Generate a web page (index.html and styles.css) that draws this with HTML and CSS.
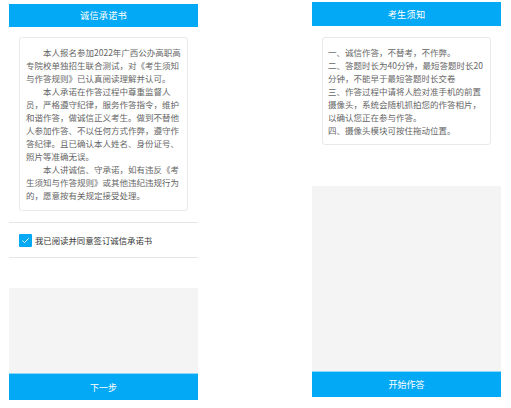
FILE: index.html
```html
<!DOCTYPE html>
<html lang="zh-CN">
<head>
<meta charset="utf-8">
<title>诚信承诺书</title>
<link rel="stylesheet" href="styles.css">
</head>
<body>
<div class="stage">
  <section class="panel panel-left">
    <header class="bar">诚信承诺书</header>
    <div class="card card-pledge">
      <p class="para">本人报名参加2022年广西公办高职高<br>专院校单独招生联合测试，对《考生须知<br>与作答规则》已认真阅读理解并认可。</p>
      <p class="para">本人承诺在作答过程中尊重监督人<br>员，严格遵守纪律，服务作答指令，维护<br>和谐作答，做诚信正义考生。做到不替他<br>人参加作答、不以任何方式作弊，遵守作<br>答纪律。且已确认本人姓名、身份证号、<br>照片等准确无误。</p>
      <p class="para">本人讲诚信、守承诺，如有违反《考<br>生须知与作答规则》或其他违纪违规行为<br>的，愿意按有关规定接受处理。</p>
    </div>
    <label class="agree">
      <span class="check"><svg viewBox="0 0 13 13" width="13" height="13"><path d="M3.6 6.8 L5.6 8.6 L9.4 4.6" fill="none" stroke="#fff" stroke-width="0.9" stroke-linecap="round" stroke-linejoin="round"/></svg></span>
      <span class="agree-text">我已阅读并同意签订诚信承诺书</span>
    </label>
    <div class="spacer spacer-left"></div>
    <div class="gray gray-left"></div>
    <button class="btn">下一步</button>
  </section>

  <section class="panel panel-right">
    <header class="bar">考生须知</header>
    <div class="card card-notice">
      <p class="line">一、诚信作答，不替考，不作弊。</p>
      <p class="line">二、答题时长为40分钟，最短答题时长20<br>分钟，不能早于最短答题时长交卷</p>
      <p class="line">三、作答过程中请将人脸对准手机的前置<br>摄像头，系统会随机抓拍您的作答相片，<br>以确认您正在参与作答。</p>
      <p class="line">四、摄像头模块可按住拖动位置。</p>
    </div>
    <div class="spacer spacer-right"></div>
    <div class="gray gray-right"></div>
    <button class="btn">开始作答</button>
  </section>
</div>
</body>
</html>
```

FILE: styles.css
```css
* { box-sizing: border-box; }
html, body {
  margin: 0;
  padding: 0;
  background: #fff;
}
body {
  font-family: "Noto Sans CJK SC", "Noto Sans", sans-serif;
  width: 511px;
  height: 408px;
  overflow: hidden;
}
.stage {
  display: flex;
  align-items: flex-start;
  gap: 114px;
  padding-left: 9px;
}
.panel {
  width: 189px;
  display: flex;
  flex-direction: column;
}
.panel-left { margin-top: 4px; }
.panel-right { margin-top: 2px; }

.bar {
  height: 23px;
  background: #03a9f4;
  color: #fff;
  font-size: 9.2px;
  line-height: 23px;
  text-align: center;
  letter-spacing: 0.2px;
}
.panel-right .bar { height: 24px; line-height: 24px; }

.card {
  margin: 10px 10px 0;
  border: 1px solid #e9e9e9;
  border-radius: 3px;
  color: #666;
  font-size: 8.5px;
  line-height: 13px;
  white-space: nowrap;
}
.card-pledge {
  height: 174px;
  padding: 8px 6px 8px 6px;
}
.panel-right .card { margin-top: 11px; }
.card-notice {
  height: 108px;
  padding: 8px 5px;
}
.para {
  margin: 0;
  text-indent: 2em;
}
.line { margin: 0; }

.agree {
  margin-top: 11px;
  height: 36px;
  border-top: 1px solid #e6e6e6;
  border-bottom: 1px solid #e6e6e6;
  display: flex;
  align-items: center;
  padding-left: 10px;
  gap: 3px;
}
.check {
  width: 13px;
  height: 13px;
  background: #03a9f4;
  border-radius: 1px;
  display: flex;
}
.agree-text {
  font-size: 8.4px;
  color: #333;
  line-height: 13px;
}

.spacer-left { height: 30px; }
.spacer-right { height: 41px; }

.gray { background: #f4f4f4; }
.gray-left { height: 85px; }
.gray-right { height: 185px; }

.btn {
  display: block;
  width: 100%;
  height: 27px;
  border: 0;
  border-top: 1px solid #8fd6f7;
  background: #03a9f4;
  color: #fff;
  font-family: inherit;
  font-size: 9px;
  padding: 0;
  margin: 0;
}
.panel-right .btn { height: 26px; }
```
